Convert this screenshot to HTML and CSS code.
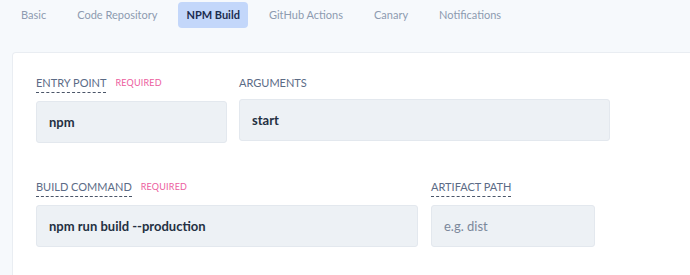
FILE: index.html
```html
<!DOCTYPE html>
<html lang="en">
<head>
  <meta charset="UTF-8" />
  <title>NPM Build</title>
  <link rel="stylesheet" href="styles.css">
</head>
<body>
  <nav class="tabs">
    <a href="#" class="tab">Basic</a>
    <a href="#" class="tab">Code Repository</a>
    <a href="#" class="tab active">NPM Build</a>
    <a href="#" class="tab">GitHub Actions</a>
    <a href="#" class="tab">Canary</a>
    <a href="#" class="tab">Notifications</a>
  </nav>

  <div class="card">
    <div class="form-row">
      <div class="field entry">
        <div class="label-row">
          <span class="term">ENTRY POINT</span>
          <span class="required">REQUIRED</span>
        </div>
        <input type="text" value="npm" />
      </div>
      <div class="field args">
        <div class="label-row">
          <span class="plain">ARGUMENTS</span>
        </div>
        <input type="text" value="start" />
      </div>
    </div>

    <div class="form-row second">
      <div class="field build">
        <div class="label-row">
          <span class="term">BUILD COMMAND</span>
          <span class="required">REQUIRED</span>
        </div>
        <input type="text" value="npm run build --production" />
      </div>
      <div class="field artifact">
        <div class="label-row">
          <span class="term">ARTIFACT PATH</span>
        </div>
        <input type="text" placeholder="e.g. dist" />
      </div>
    </div>
  </div>
</body>
</html>
```

FILE: styles.css
```css
body {
  font-family: Lato, "Open Sans", sans-serif;
  margin: 0;
  padding: 0;
  background: #f6f9fc;
  overflow: hidden;
}

.tabs {
  display: flex;
  align-items: center;
  gap: 11px;
  padding: 2px 0 0 11px;
}

.tab {
  display: block;
  padding: 0 10px;
  height: 26px;
  line-height: 26px;
  border-radius: 4px;
  font-size: 11px;
  color: #8d9bb0;
  text-decoration: none;
}

.tab.active {
  background: #c3d7fa;
  color: #1b2c4f;
  font-weight: 700;
  padding: 0 8px;
}

.card {
  margin: 24px 0 0 12px;
  width: 700px;
  height: 223px;
  background: white;
  border: 1px solid #e9edf2;
  border-bottom: none;
  border-radius: 4px 4px 0 0;
  padding: 22px 0 0 23px;
  box-sizing: border-box;
}

.form-row {
  display: flex;
  align-items: flex-start;
  gap: 12px;
}

.form-row.second {
  margin-top: 36px;
  gap: 13px;
}

.field {
  display: flex;
  flex-direction: column;
}

.entry { width: 191px; }
.args { width: 371px; }
.build { width: 382px; }
.artifact { width: 164px; }

.label-row {
  display: flex;
  align-items: flex-start;
  gap: 9px;
  margin-bottom: 8px;
  line-height: 16px;
}

.term,
.plain {
  font-size: 11px;
  color: #5b6b86;
}

.term {
  display: inline-block;
  border-bottom: 1px dashed #4a5568;
  padding-bottom: 1px;
}

.required {
  font-size: 9px;
  color: #ec5c9e;
  letter-spacing: 0.2px;
}

.field input {
  width: 100%;
  height: 42px;
  box-sizing: border-box;
  padding: 0 12px;
  background: #edf1f5;
  border: 1px solid #e3e8ee;
  border-radius: 3px;
  font-family: inherit;
  font-size: 13px;
  font-weight: 700;
  color: #243042;
  outline: none;
}

.field input::placeholder {
  color: #7b889b;
  font-weight: 400;
}
```
